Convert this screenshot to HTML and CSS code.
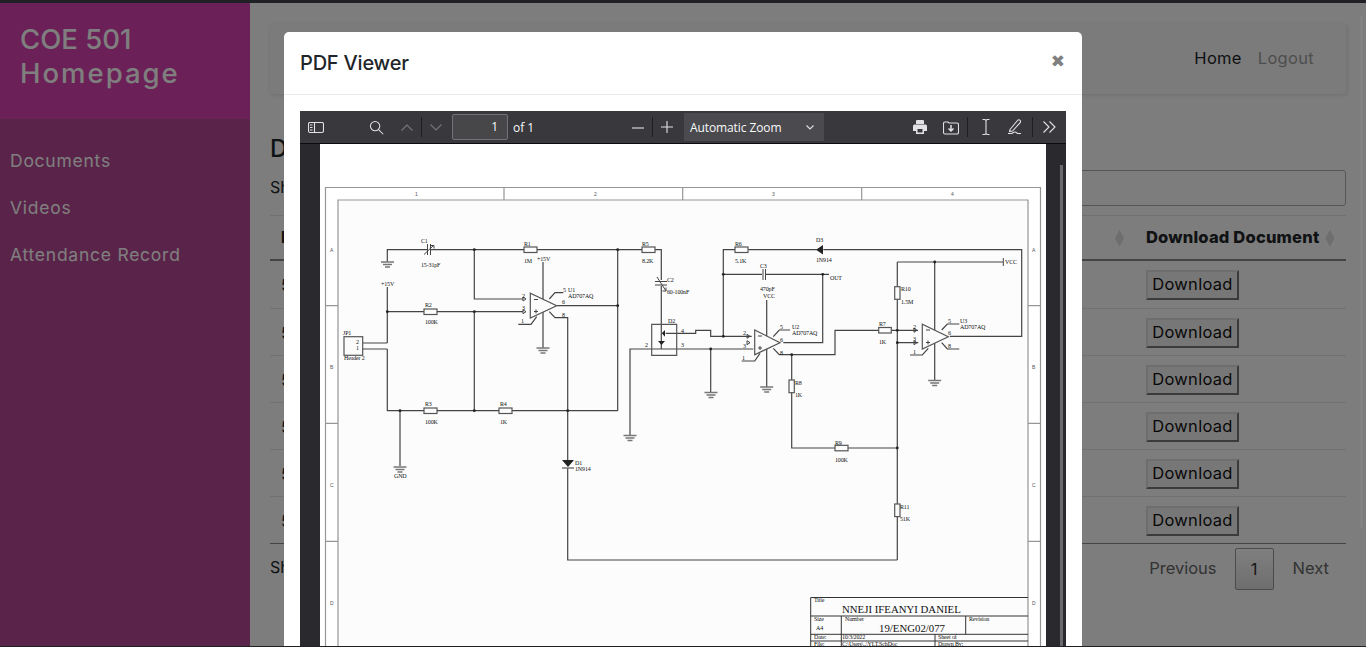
FILE: index.html
```html
<!DOCTYPE html>
<html lang="en">
<head>
<meta charset="utf-8">
<title>COE 501 Homepage</title>
<link rel="stylesheet" href="styles.css">
</head>
<body>
<div class="app">
  <aside class="sidebar">
    <div class="brand"><span class="brand-a">COE 501</span><span class="brand-b">Homepage</span></div>
    <nav class="side-nav">
      <a>Documents</a>
      <a>Videos</a>
      <a>Attendance Record</a>
    </nav>
  </aside>
  <main class="content">
    <header class="topbar">
      <a class="top-active">Home</a>
      <a>Logout</a>
    </header>
    <h2 class="page-title">Documents</h2>
    <div class="table-tools">
      <span>Show 10 entries</span>
      <label class="search-box"><input class="search-input" type="text"></label>
    </div>
    <table class="doc-table">
      <thead>
        <tr><th class="col-a">Doc</th><th class="col-m"><span class="sort"></span></th><th class="col-b">Download Document<span class="sort"></span></th></tr>
      </thead>
      <tbody>
        <tr><td class="col-a">501</td><td></td><td class="col-b"><button class="dl">Download</button></td></tr>
        <tr><td class="col-a">501</td><td></td><td class="col-b"><button class="dl">Download</button></td></tr>
        <tr><td class="col-a">501</td><td></td><td class="col-b"><button class="dl">Download</button></td></tr>
        <tr><td class="col-a">501</td><td></td><td class="col-b"><button class="dl">Download</button></td></tr>
        <tr><td class="col-a">501</td><td></td><td class="col-b"><button class="dl">Download</button></td></tr>
        <tr><td class="col-a">501</td><td></td><td class="col-b"><button class="dl">Download</button></td></tr>
      </tbody>
    </table>
    <div class="table-foot">
      <span>Showing 1 to 6 of 6 entries</span>
      <div class="pager"><a>Previous</a><a class="page-current">1</a><a class="page-next">Next</a></div>
    </div>
  </main>
</div>
<div class="backdrop"></div>
<i class="page-scroll"></i>
<section class="modal">
  <div class="modal-head">
    <h3 class="modal-title">PDF Viewer</h3>
    <span class="modal-close">✖</span>
  </div>
  <div class="modal-body">
    <div class="viewer">
      <div class="pdf-bar">
        <svg class="ic ic-side" viewBox="0 0 16 12"><rect x=".5" y=".5" width="15" height="10" rx="1.5"/><path d="M6.500.5v10M2 3h2.500M2 5.500h2.500M2 8h2.500"/></svg>
        <svg class="ic ic-search" viewBox="0 0 16 16"><circle cx="6.5" cy="6.5" r="5"/><path d="M10.200 10.200l5 5"/></svg>
        <svg class="ic ic-up dim" viewBox="0 0 12 7"><path d="M.5 6.500L6 1l5.500 5.500"/></svg>
        <i class="bar-sep sep-nav"></i>
        <svg class="ic ic-down dim" viewBox="0 0 12 7"><path d="M.5.5L6 6 11.500.5"/></svg>
        <span class="page-input">1</span>
        <span class="page-of">of 1</span>
        <svg class="ic ic-minus" viewBox="0 0 12 12"><path d="M0 6h12"/></svg>
        <i class="bar-sep sep-zoom"></i>
        <svg class="ic ic-plus" viewBox="0 0 12 12"><path d="M0 6h12M6 0v12"/></svg>
        <span class="zoom-select">Automatic Zoom<svg class="ic ic-caret" viewBox="0 0 8 5"><path d="M.5.5L4 4 7.500.5"/></svg></span>
        <svg class="ic ic-print solid" viewBox="0 0 14 14"><path d="M4 0h6a1 1 0 0 1 1 1v3H3V1a1 1 0 0 1 1-1zM1.500 4.500h11A1.500 1.500 0 0 1 14 6v5h-3v3H3v-3H0V6a1.500 1.500 0 0 1 1.500-1.500zM4.500 9v3.500h5V9z"/></svg>
        <svg class="ic ic-save" viewBox="0 0 16 14"><path d="M5 1H2a1.500 1.500 0 0 0-1.500 1.500v9A1.500 1.500 0 0 0 2 13h12a1.500 1.500 0 0 0 1.500-1.500v-8A1.500 1.500 0 0 0 14 2H6z"/><path class="thick" d="M8 4v6M5.500 7.500L8 10l2.500-2.500"/></svg>
        <i class="bar-sep sep-tool"></i>
        <svg class="ic ic-ibeam" viewBox="0 0 8 16"><path d="M.5.500h2c1 0 1.500.5 1.500 1.500v12c0 1-.5 1.500-1.500 1.500h-2M7.500.5h-2C4.500.5 4 1 4 2M4 14c0 1 .5 1.500 1.500 1.500h2"/></svg>
        <svg class="ic ic-pen" viewBox="0 0 15 15"><path d="M3 10.500L10.500 1.500c.8-.9 1.800-.9 2.500-.2s.7 1.700 0 2.500L5.500 12 2.500 12.500zM1 14.500h3c2 0 2-1.500 4-1.500s1.500 1.500 3 1.500h3"/></svg>
        <i class="bar-sep sep-more"></i>
        <svg class="ic ic-more" viewBox="0 0 13 12"><path d="M.5.500L6 6 .5 11.500M6.500.5L12 6 6.500 11.500"/></svg>
      </div>
      <div class="pdf-stage">
        <svg class="sheet" viewBox="320 144 726 503">
          <rect class="s-in" x="338" y="200" width="690" height="460"/>
          <path class="s-frame" d="M325.500 660V187.500H1040.500V660M338 660V200H1028V660M504 187.500V200M682.700 187.500V200M861.700 187.500V200M325.500 305.700H338M325.500 423.300H338M325.500 541.300H338M1028 305.700H1040.500M1028 423.300H1040.500M1028 541.300H1040.500"/>
          <g class="s-tiny">
            <text x="415" y="196">1</text><text x="594" y="196">2</text><text x="772" y="196">3</text><text x="951" y="196">4</text>
            <text x="330" y="252">A</text><text x="330" y="369">B</text><text x="330" y="487">C</text><text x="330" y="605">D</text>
            <text x="1032" y="252">A</text><text x="1032" y="369">B</text><text x="1032" y="487">C</text><text x="1032" y="605">D</text>
          </g>
          <path class="wire" d="M387.300 261.700V249.700H427M431 249.700H524M537 249.700H642M655 249.700H661.300V280M661.300 286V323M474.300 249.700V299H523M617.700 249.700V410.700M387.300 287V343M387.300 349V410.700H424M437 410.700H499M512 410.700H617.700M362.700 343H387.300M362.700 349H387.300M387.300 311.700H424M437 311.700H523M474.300 311.700V410.700M400 410.700V466M543 262V348M557 305.700H617.700M549.300 299L555 292.700H563.300M549.300 311.700L555 317.700H567.700V460M567.700 468V560H897.300M518.300 324.300H531L536.700 316.700"/>
          <path class="wire" d="M630 435V349H753.300M661.300 323V349M665.700 333.300H695.700V330.300H710.700V336.300H751.700M710.700 349V392M723.300 336.300V249.700H735M748.300 249.700H816.700M823.300 249.700H1021.700V336.300H950M723.300 274.300H762M765.500 274.300H829M822.700 274.300V342.700H783.300M766.700 300V387M773.300 336.700L779.300 330H790M773.300 348.300L779.300 354.700H835V330.300H878.700M891.300 330.300H918M791.700 354.700V380M791.700 392.700V448H835M848 448H897.300M741.700 361H754.700L760 353.300M897.300 262V286.700M897.300 299.300V504M897.300 516V560M897.300 262H1003.300M897.300 342.700H918.300M934.700 262V380M941.700 330L947.300 324H959.300M941.700 342.700L947.300 349H959.300M910 355H922.300L928.300 348.300"/>
          <path class="wire-2" d="M1003.300 258V266M427.500 244V255M430.500 244V255M763 269V280M765.500 269V280M655 281.500H667M655 285H667M424 254.500L434 245M431 245.500H434V248.500M657 277L666 291M666 287.500V291H662.500"/>
          <g class="boxes">
            <rect x="524" y="247" width="13" height="5.500"/><rect x="424" y="309" width="13" height="5.500"/><rect x="424" y="408" width="13" height="5.500"/><rect x="499" y="408" width="13" height="5.500"/><rect x="642" y="247" width="13" height="5.500"/><rect x="735" y="247" width="13" height="5.500"/><rect x="878.700" y="327.500" width="12.600" height="5.500"/><rect x="835" y="445.300" width="13" height="5.500"/>
            <rect x="894.700" y="286.700" width="5.300" height="12.600"/><rect x="789" y="380" width="5.300" height="12.700"/><rect x="894.700" y="504" width="5.300" height="12.600"/>
            <rect x="344" y="336.700" width="18.700" height="18.600"/>
            <path d="M530.300 293.300V318L556.700 305.700zM754.700 330V354.700L780 342.700zM922.300 324.300V349L948.300 336.700z"/>
            <path class="d2" d="M651.700 324.300H676.700V355.300H651.700z"/>
          </g>
          <path class="wire-2" d="M534 299.500H538M534 311.500H538M536 309.500V313.500M758 336H762M758 348H762M760 346V350M926 330H930M926 342.500H930M928 340.500V344.500M523 297l3 2-3 2zM523 309.700l3 2-3 2zM747 334.300l3 2-3 2zM747 340.700l3 2-3 2zM914 328.300l3 2-3 2zM914 340.700l3 2-3 2z"/>
          <g class="solid-dark">
            <path d="M816 249.700L823 245V254.500zM562 460H574L568 467zM661.800 333.300L665 330V336.700zM658 341H665L661.500 345z"/>
            <circle cx="474.300" cy="249.700" r="1.400"/><circle cx="617.700" cy="249.700" r="1.400"/><circle cx="387.300" cy="311.700" r="1.400"/><circle cx="474.300" cy="311.700" r="1.400"/><circle cx="617.700" cy="305.700" r="1.400"/><circle cx="400" cy="410.700" r="1.400"/><circle cx="474.300" cy="410.700" r="1.400"/><circle cx="567.700" cy="410.700" r="1.400"/><circle cx="723.300" cy="274.300" r="1.400"/><circle cx="822.700" cy="274.300" r="1.400"/><circle cx="723.300" cy="336.300" r="1.400"/><circle cx="710.700" cy="349" r="1.400"/><circle cx="791.700" cy="354.700" r="1.400"/><circle cx="897.300" cy="330.300" r="1.400"/><circle cx="897.300" cy="342.700" r="1.400"/><circle cx="934.700" cy="262" r="1.400"/><circle cx="897.300" cy="448" r="1.400"/>
          </g>
          <path class="gnd" d="M381 262H394M383 264.500H392M385 267H390M536.500 348H549.500M538.500 350.500H547.500M540.500 353H545.500M393.500 467H406.500M395.500 469.500H404.500M397.500 472H402.500M623.500 435.500H636.500M625.500 438H634.500M627.500 440.500H632.500M704.500 392.500H717.500M706.500 395H715.500M708.500 397.500H713.500M760.200 387H773.200M762.200 389.500H771.200M764.200 392H769.200M928.200 380.500H941.200M930.200 383H939.200M932.200 385.500H937.200M562 468H574"/>
          <g class="s-label">
            <text x="421" y="243">C1</text><text x="421" y="267">15-31pF</text><text x="524" y="246">R1</text><text x="524" y="263">1M</text><text x="537" y="261">+15V</text><text x="381" y="286">+15V</text><text x="425" y="307">R2</text><text x="425" y="324">100K</text><text x="563" y="292">5</text><text x="568" y="292">U1</text><text x="568" y="298">AD707AQ</text><text x="343" y="335">JP1</text><text x="344" y="360">Header 2</text><text x="356" y="344">2</text><text x="356" y="350">1</text><text x="425" y="406">R3</text><text x="425" y="424">100K</text><text x="500" y="406">R4</text><text x="500" y="424">1K</text><text x="642" y="246">R5</text><text x="642" y="263">8.2K</text><text x="667" y="282">C2</text><text x="667" y="294">60-100nF</text><text x="668" y="323">D2</text><text x="735" y="246">R6</text><text x="735" y="263">5.1K</text><text x="816" y="242">D3</text><text x="816" y="262">1N914</text><text x="760" y="268">C3</text><text x="760" y="291">470pF</text><text x="763" y="298">VCC</text><text x="830" y="280">OUT</text><text x="792" y="329">U2</text><text x="792" y="335">AD707AQ</text><text x="879" y="326">R7</text><text x="879" y="344">1K</text><text x="901" y="291">R10</text><text x="901" y="304">1.5M</text><text x="960" y="323">U3</text><text x="960" y="329">AD707AQ</text><text x="1005" y="264">VCC</text><text x="795" y="385">R8</text><text x="795" y="397">1K</text><text x="835" y="445">R9</text><text x="835" y="462">100K</text><text x="900" y="509">R11</text><text x="900" y="521">51K</text><text x="394" y="478">GND</text><text x="575" y="465">D1</text><text x="575" y="471">1N914</text>
            <text x="522" y="298">2</text><text x="522" y="310">3</text><text x="521" y="323">1</text><text x="562" y="304">6</text><text x="562" y="317">8</text><text x="743" y="335">2</text><text x="743" y="348">3</text><text x="742" y="360">1</text><text x="780" y="329">5</text><text x="780" y="342">6</text><text x="780" y="355">8</text><text x="913" y="329">2</text><text x="913" y="341">3</text><text x="913" y="354">1</text><text x="948" y="323">5</text><text x="948" y="335">6</text><text x="948" y="348">8</text><text x="645" y="347">2</text><text x="681" y="347">3</text><text x="681" y="333">4</text>
          </g>
          <path class="tb" d="M810.700 660V597.500H1028M810.700 616H1028M841.300 616V660M965.700 616V634.300M810.700 634.300H1028M810.700 641H1028M935 634.300V660"/>
          <g class="s-label">
            <text x="814" y="602">Title</text><text x="814" y="621">Size</text><text x="816" y="630">A4</text><text x="845" y="621">Number</text><text x="969" y="621">Revision</text><text x="814" y="639">Date:</text><text x="842" y="639">10/3/2022</text><text x="938" y="639">Sheet   of</text><text x="814" y="646">File:</text><text x="842" y="646">C:\Users\..\YLT.SchDoc</text><text x="938" y="646">Drawn By:</text>
          </g>
          <text class="s-big" x="842" y="612.500">NNEJI IFEANYI DANIEL</text>
          <text class="s-big" x="879" y="632">19/ENG02/077</text>
        </svg>
        <i class="pdf-scroll"></i>
      </div>
    </div>
  </div>
</section>
</body>
</html>
```

FILE: styles.css
```css
* { box-sizing: border-box; }
html, body { height: 100%; }
body {
  margin: 0;
  overflow: hidden;
  border-top: 3px solid #202124;
  border-bottom: 1px solid #202124;
  font-family: Inter, "Open Sans", sans-serif;
  background: #fafafa;
  color: #212529;
  position: relative;
}
a { color: inherit; text-decoration: none; }

.app { display: flex; height: 100%; }

.sidebar { width: 250px; flex: none; background: #b44692; color: #fff; }
.brand {
  height: 116px;
  padding: 19px 20px 0;
  background: #d642ae;
  font-size: 27.500px;
  line-height: 34px;
  font-weight: 500;
}
.brand-a, .brand-b { display: block; }
.brand-b { letter-spacing: 2px; }
.side-nav { display: flex; flex-direction: column; padding-top: 18px; }
.side-nav a { padding: 10px; font-size: 17.500px; line-height: 27px; letter-spacing: .75px; }

.content { flex: 1; padding: 21px 20px 0; min-width: 0; }
.topbar {
  height: 70px;
  display: flex;
  justify-content: flex-end;
  align-items: center;
  gap: 16px;
  padding: 0 32px 2px 0;
  background: #f6f6f6;
  border-radius: 3px;
  box-shadow: 1px 1px 4px rgba(0,0,0,.12);
  font-size: 16.500px;
  letter-spacing: .3px;
  color: #9d9d9d;
}
.top-active { color: #212529; }
.page-title { margin: 37px 0 0; font-size: 24px; line-height: 36px; font-weight: 500; }
.table-tools { display: flex; justify-content: space-between; align-items: center; margin-top: 3px; height: 36px; }
.table-tools span { padding-bottom: 2px; }
.search-box { width: 600px; display: block; }
.search-input { display: block; width: 100%; height: 36px; border: 1px solid #aaa; border-radius: 3px; background: transparent; }

.doc-table { width: 100%; margin-top: 9px; border-collapse: collapse; border-top: 1px solid #dee2e6; }
.doc-table th { height: 44px; padding: 0 10px 1px; font-size: 16.500px; font-weight: 800; letter-spacing: .2px; text-align: left; border-bottom: 2px solid #888; white-space: nowrap; }
.doc-table td { height: 47px; padding: 2px 10px 0; font-size: 16px; border-bottom: 1px solid #dee2e6; }
.doc-table tbody tr:first-child td { height: 49px; padding-top: 1px; }
.doc-table tbody tr:last-child td { border-bottom-color: #888; }
.doc-table .col-a { padding-left: 11px; width: 300px; }
.doc-table .col-m { text-align: right; padding-right: 22px; }
.doc-table .col-b { width: 200px; padding-left: 0; padding-right: 0; }
.sort {
  display: inline-block;
  width: 9px;
  height: 17px;
  margin-left: 6px;
  vertical-align: middle;
  background: #dcdcdc;
  clip-path: polygon(50% 0, 100% 50%, 50% 100%, 0 50%);
}
.dl {
  display: block;
  width: 93px;
  height: 30px;
  padding: 0 0 2px;
  border: 2px solid;
  border-color: #dcdcdc #767676 #767676 #dcdcdc;
  background: #efefef;
  color: #111;
  font: 16.500px Inter, sans-serif;
  letter-spacing: .3px;
}
.table-foot { display: flex; justify-content: space-between; align-items: center; margin-top: 4px; font-size: 16px; }
.table-foot > span { padding-bottom: 4px; }
.pager { display: flex; align-items: center; color: #666; font-size: 16.500px; }
.pager a { padding: 0 18px 2px; }
.pager .page-next { padding: 0 17px 2px 19px; }
.pager .page-current {
  width: 39px;
  height: 42px;
  padding: 0;
  display: flex;
  align-items: center;
  justify-content: center;
  border: 1px solid #979797;
  border-radius: 2px;
  background: linear-gradient(#fff, #dcdcdc);
  color: #333;
}

.backdrop { position: absolute; inset: 0; background: rgba(0,0,0,.5); }
.page-scroll { position: absolute; right: 3px; top: 13px; width: 3px; height: 512px; background: rgba(255,255,255,.05); }

.modal {
  position: absolute;
  left: 284px;
  top: 29px;
  width: 798px;
  height: 700px;
  background: #fff;
  border-radius: 5px 5px 0 0;
}
.modal-head {
  height: 63px;
  padding: 0 16px;
  display: flex;
  justify-content: space-between;
  align-items: center;
  border-bottom: 1px solid #e9ecef;
}
.modal-title { margin: 0; font-size: 20px; font-weight: 500; letter-spacing: -.2px; color: #212529; }
.modal-close { color: #808080; font-size: 17px; font-weight: 700; margin: 0 1px 4px 0; font-family: "DejaVu Sans", sans-serif; }
.modal-body { padding: 16px; }

.viewer { width: 766px; height: 560px; background: #2a2a2e; }
.pdf-bar {
  height: 33px;
  position: relative;
  background: #38383d;
  border-bottom: 1px solid #0c0c0d;
  color: #f9f9fa;
}
.ic { position: absolute; fill: none; stroke: #e2e2e4; stroke-width: 1.100; }
.ic.solid { fill: #e2e2e4; stroke: none; fill-rule: evenodd; }
.ic.dim { stroke: #77777b; }
.thick { stroke-width: 1.500; }
.ic-side { left: 8px; top: 11px; width: 16px; height: 12px; }
.ic-search { left: 69px; top: 9px; width: 15px; height: 15px; }
.ic-up { left: 101px; top: 13px; width: 12px; height: 7px; }
.ic-down { left: 130px; top: 13px; width: 12px; height: 7px; }
.ic-minus { left: 332px; top: 11px; width: 12px; height: 12px; }
.ic-plus { left: 361px; top: 10px; width: 12px; height: 12px; }
.ic-print { left: 613px; top: 9px; width: 14px; height: 14px; }
.ic-save { left: 643px; top: 10px; width: 16px; height: 14px; }
.ic-ibeam { left: 682px; top: 8px; width: 8px; height: 16px; }
.ic-pen { left: 707px; top: 8px; width: 15px; height: 15px; }
.ic-more { left: 743px; top: 10px; width: 13px; height: 12px; }
.ic-caret { left: 122px; top: 12px; width: 8px; height: 5px; }
.bar-sep { position: absolute; top: 6px; width: 1px; height: 20px; background: #1f1f22; }
.sep-nav { left: 121px; }
.sep-zoom { left: 352px; }
.sep-tool { left: 667px; }
.sep-more { left: 732px; }
.page-input {
  position: absolute;
  left: 152px;
  top: 3px;
  width: 56px;
  height: 26px;
  padding-right: 9px;
  border: 1px solid #737377;
  border-radius: 2px;
  background: #474749;
  text-align: right;
  font: 12px/24px "Open Sans", sans-serif;
}
.page-of { position: absolute; left: 213px; top: 9px; font: 12px/16px "Open Sans", sans-serif; }
.zoom-select {
  position: absolute;
  left: 384px;
  top: 2px;
  width: 140px;
  height: 28px;
  padding-left: 6px;
  background: #4a4a4f;
  border-radius: 1px;
  font: 12px/29px "Open Sans", sans-serif;
  letter-spacing: -.1px;
}

.pdf-stage { position: relative; height: 527px; }
.sheet { display: block; position: absolute; left: 20px; top: 0; width: 726px; height: 503px; background: #fff; }
.pdf-scroll { position: absolute; left: 760px; top: 21px; width: 3px; height: 500px; background: #6a6a6d; }

.s-in { fill: #fcfcfc; }
.s-frame { fill: none; stroke: #969696; stroke-width: 1.200; }
.s-tiny { font: 5px "Liberation Sans", sans-serif; fill: #555; }
.s-label { font: 6px "Liberation Serif", serif; fill: #111; letter-spacing: -.15px; }
.s-big { font: 10.800px "Liberation Serif", serif; fill: #111; }
.wire { fill: none; stroke: #444; stroke-width: 1.200; }
.wire-2 { fill: none; stroke: #444; stroke-width: 1; }
.boxes rect, .boxes path { fill: #fcfcfc; stroke: #555; stroke-width: 1.200; }
.boxes .d2 { fill: none; }
.solid-dark { fill: #222; }
.gnd { fill: none; stroke: #777; stroke-width: 1.500; }
.tb { fill: none; stroke: #333; stroke-width: 1; }
```
